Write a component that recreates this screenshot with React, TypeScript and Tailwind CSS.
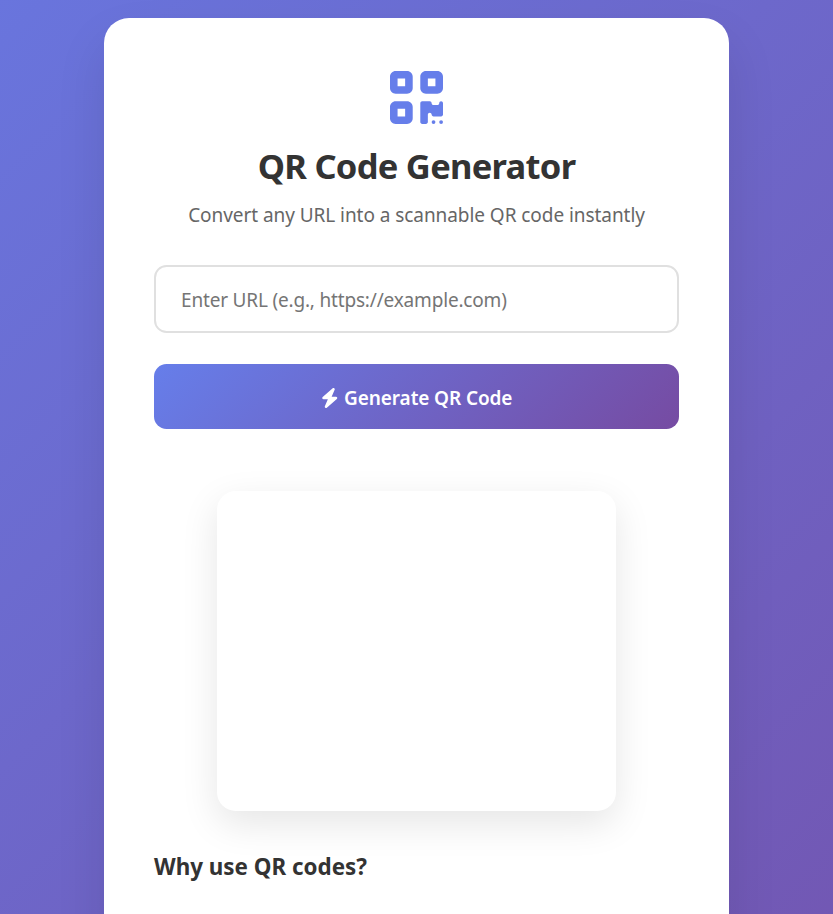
import { FaBolt, FaQrcode } from "react-icons/fa6";

export default function App() {
  return (
    <div className="h-[914px] overflow-hidden bg-[linear-gradient(135deg,#667eea_-31.6%,#764ba2_144%)] font-['Noto_Sans','Open_Sans',sans-serif]">
      <div className="flex h-[1129px] justify-center pt-[18px]">
        <main className="flex h-[1093px] w-[625px] flex-col items-center rounded-[25px] bg-white px-[50px] pt-[50px] shadow-[0_25px_50px_rgba(0,0,0,0.1)]">
          <FaQrcode className="-mt-[1px] h-[61px] w-[53px] shrink-0 text-[#667eea]" />
          <h1 className="mt-[14px] h-[47px] text-[34.5px] font-bold leading-[47px] tracking-[-0.72px] whitespace-nowrap text-[#333]">
            QR Code Generator
          </h1>
          <p className="mt-[13px] h-[27px] text-[19px] leading-[27px] tracking-[-0.06px] whitespace-nowrap text-[#666]">
            Convert any URL into a scannable QR code instantly
          </p>
          <input
            type="text"
            placeholder="Enter URL (e.g., https://example.com)"
            className="mt-[36px] h-[68px] w-full shrink-0 rounded-[12.5px] border-2 border-[#e0e0e0] bg-white px-[25px] pt-[2px] text-[19px] tracking-[-0.18px] text-[#333] outline-none placeholder:text-[#757575]"
          />
          <button className="mt-[31px] flex h-[65px] w-full shrink-0 items-center justify-center gap-[6px] rounded-[12.5px] bg-[linear-gradient(135deg,#667eea_0%,#764ba2_100%)] pt-[2px] text-[19px] font-semibold tracking-[-0.1px] whitespace-nowrap text-white">
            <FaBolt className="h-[20px] w-[17.5px]" />
            <span className="pt-[2px]">Generate QR Code</span>
          </button>
          <div className="mt-[62px] h-[320px] w-[399px] shrink-0 rounded-[18.75px] bg-white shadow-[0_12.5px_37.5px_rgba(0,0,0,0.1)]" />
          <h2 className="mt-[40px] h-[32px] w-full text-[22.4px] font-bold leading-[32px] text-[#333]">
            Why use QR codes?
          </h2>
        </main>
      </div>
    </div>
  );
}
